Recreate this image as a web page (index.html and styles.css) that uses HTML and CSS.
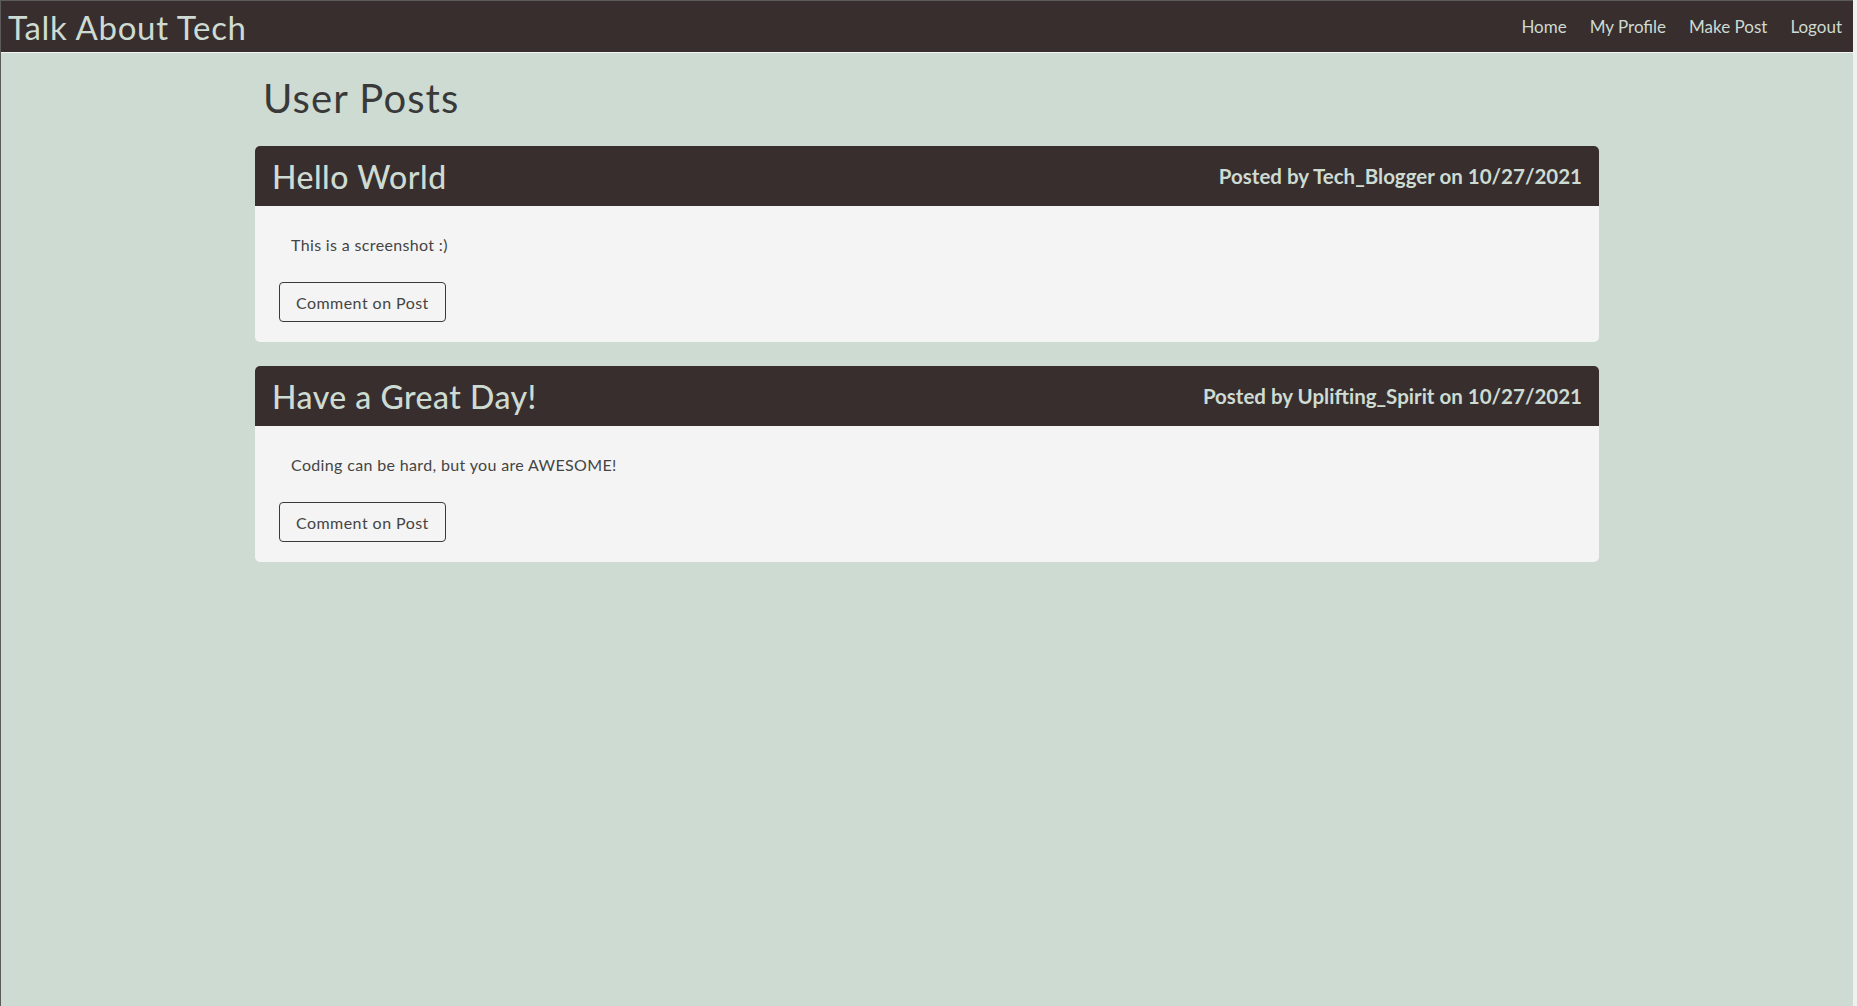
FILE: index.html
```html
<!DOCTYPE html>
<html lang="en">
<head>
<meta charset="utf-8">
<title>Talk About Tech</title>
<link rel="stylesheet" href="styles.css">
</head>
<body>
<div class="frame">
  <header class="navbar">
    <a class="brand" href="#">Talk About Tech</a>
    <nav class="nav">
      <a href="#">Home</a>
      <a href="#">My Profile</a>
      <a href="#">Make Post</a>
      <a href="#">Logout</a>
    </nav>
  </header>
  <main class="main">
    <h1 class="page-title">User Posts</h1>
    <article class="card">
      <div class="card-header">
        <h2 class="post-title">Hello World</h2>
        <span class="post-meta">Posted by Tech_Blogger on 10/27/2021</span>
      </div>
      <div class="card-body">
        <p class="post-text">This is a screenshot :)</p>
        <button class="btn">Comment on Post</button>
      </div>
    </article>
    <article class="card">
      <div class="card-header">
        <h2 class="post-title">Have a Great Day!</h2>
        <span class="post-meta">Posted by Uplifting_Spirit on 10/27/2021</span>
      </div>
      <div class="card-body">
        <p class="post-text">Coding can be hard, but you are AWESOME!</p>
        <button class="btn">Comment on Post</button>
      </div>
    </article>
  </main>
</div>
</body>
</html>
```

FILE: styles.css
```css
html {
  background: #f0f0f0;
}
body {
  margin: 0;
  font-family: "Lato", "Open Sans", sans-serif;
}
.frame {
  margin-right: 4px;
  min-height: 1005px;
  background: #cddbd2;
  border-top: 1px solid #5b5b5b;
  border-left: 1px solid #5b5b5b;
}
.navbar {
  height: 51px;
  background: #382e2e;
  border-bottom: 1px solid #f4f4f4;
  display: flex;
  align-items: center;
  justify-content: space-between;
  padding: 0 11px 0 7px;
}
.brand {
  color: #cddbd2;
  text-decoration: none;
  font-size: 33px;
  letter-spacing: 0.7px;
}
.nav {
  display: flex;
  gap: 23px;
}
.nav a {
  color: #cddbd2;
  text-decoration: none;
  font-size: 17px;
}
.main {
  width: 1344px;
  margin: 0 auto;
  padding-top: 21px;
}
.page-title {
  margin: 0 0 24px 8px;
  font-size: 40px;
  font-weight: 400;
  line-height: 48px;
  letter-spacing: 1.1px;
  color: #393939;
}
.card {
  border-radius: 5px;
  overflow: hidden;
  margin-bottom: 24px;
  background: #f4f4f4;
}
.card-header {
  height: 60px;
  background: #382e2e;
  display: flex;
  align-items: center;
  justify-content: space-between;
  padding: 0 17px;
}
.post-title {
  margin: 0;
  font-size: 32px;
  font-weight: 500;
  letter-spacing: 0.5px;
  color: #cddbd2;
}
.post-meta {
  font-size: 20.5px;
  font-weight: 700;
  color: #cddbd2;
}
.card-body {
  padding: 20px 24px;
}
.post-text {
  margin: 7px 0 25px 12px;
  font-size: 16px;
  line-height: 24px;
  letter-spacing: 0.35px;
  color: #444;
}
.btn {
  height: 40px;
  padding: 0 16px;
  border: 1px solid #3a3a3a;
  border-radius: 4px;
  background: transparent;
  font-family: inherit;
  font-size: 16px;
  letter-spacing: 0.45px;
  color: #444;
}
```
